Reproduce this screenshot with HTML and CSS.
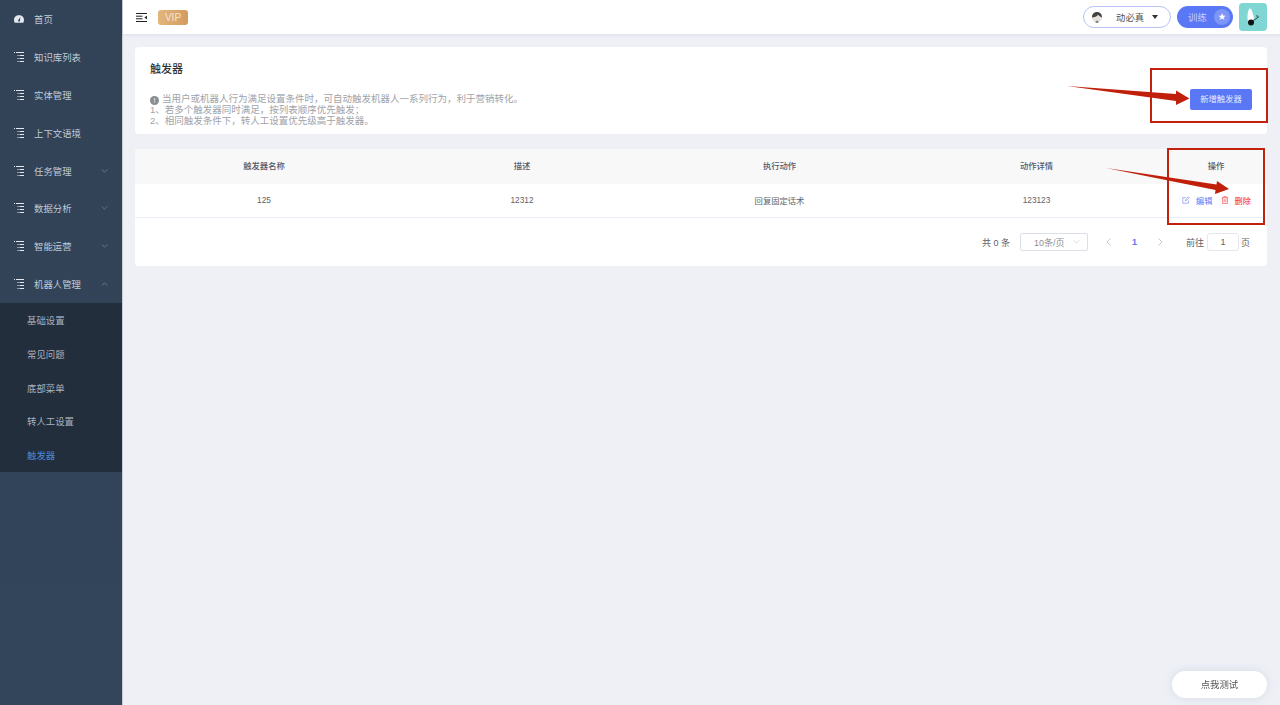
FILE: index.html
```html
<!DOCTYPE html>
<html lang="zh-CN">
<head>
  <meta charset="UTF-8" />
  <title>触发器</title>
  <link rel="stylesheet" href="styles.css">
</head>
<body>
  <svg width="0" height="0" class="defs">
    <symbol id="tree" viewBox="0 0 10 10">
      <path d="M0 .5h1M2 .5h8M3.500 3.500h1M5.500 3.500h4.500M3.500 6.500h1M5.500 6.500h4.500M3.500 9.500h1M5.500 9.500h4.500" fill="none" stroke="currentColor" stroke-width="1.100"/>
    </symbol>
    <symbol id="chev" viewBox="0 0 8 5">
      <path d="M.5 .5 4 4 7.500 .5" fill="none" stroke="currentColor" stroke-width=".8"/>
    </symbol>
  </svg>

  <div class="app">
    <aside class="sidebar">
      <a class="menu-item">
        <svg class="menu-icon" viewBox="0 0 11 8"><path d="M5.500 0C2.200 0 0 2.300 0 5c0 1.200.3 2.200.8 3h9.400c.5-.8.800-1.800.800-3 0-2.700-2.200-5-5.500-5zM4.800 5.200 7 1.800 6.500 5.700a1 1 0 1 1-1.700-.5z" fill="currentColor" fill-rule="evenodd"/></svg>
        <span>首页</span>
      </a>
      <a class="menu-item"><svg class="menu-icon"><use href="#tree"/></svg><span>知识库列表</span></a>
      <a class="menu-item"><svg class="menu-icon"><use href="#tree"/></svg><span>实体管理</span></a>
      <a class="menu-item"><svg class="menu-icon"><use href="#tree"/></svg><span>上下文语境</span></a>
      <a class="menu-item"><svg class="menu-icon"><use href="#tree"/></svg><span>任务管理</span><svg class="menu-chev"><use href="#chev"/></svg></a>
      <a class="menu-item"><svg class="menu-icon"><use href="#tree"/></svg><span>数据分析</span><svg class="menu-chev"><use href="#chev"/></svg></a>
      <a class="menu-item"><svg class="menu-icon"><use href="#tree"/></svg><span>智能运营</span><svg class="menu-chev"><use href="#chev"/></svg></a>
      <a class="menu-item"><svg class="menu-icon"><use href="#tree"/></svg><span>机器人管理</span><svg class="menu-chev open"><use href="#chev"/></svg></a>
      <div class="submenu">
        <a class="sub-item">基础设置</a>
        <a class="sub-item">常见问题</a>
        <a class="sub-item">底部菜单</a>
        <a class="sub-item">转人工设置</a>
        <a class="sub-item active">触发器</a>
      </div>
    </aside>

    <div class="main">
      <header class="topbar">
        <svg class="fold" viewBox="0 0 11 9"><path d="M0 .5h11M0 3.200h6.500M0 5.800h6.500M0 8.500h11" fill="none" stroke="#222" stroke-width="1"/><path d="M11 2.800v3.400L8.300 4.500z" fill="#222"/></svg>
        <span class="vip">VIP</span>
        <div class="topbar-right">
          <div class="user-pill">
            <svg class="avatar" viewBox="0 0 12 12"><circle cx="6" cy="6.500" r="5" fill="#e8e2dc"/><path d="M1 6.500C1 2.500 3.500 1 6 1s5 1.500 5 5.500C9.500 6 8 4.500 7 3.800 6 5.500 3 6.500 1 6.500z" fill="#444"/><circle cx="6" cy="11" r="1.500" fill="#888"/></svg>
            <span class="user-name">动必真</span>
            <span class="caret"></span>
          </div>
          <div class="train-pill">
            <span>训练</span>
            <span class="star-dot">★</span>
          </div>
          <div class="logo-box">
            <svg viewBox="0 0 28 28" width="28" height="28"><path d="M10 6c1-1 2.500 0 3 2l2 6-1 4-5 0c-1-3-.5-9 1-12z" fill="#fff"/><circle cx="12" cy="19.500" r="3" fill="#111"/><path d="M14 18l6-4.500" stroke="#222" stroke-width=".8"/><circle cx="18" cy="13" r=".7" fill="#222"/></svg>
          </div>
        </div>
      </header>

      <div class="content">
        <section class="card intro">
          <div class="intro-text">
            <h2>触发器</h2>
            <p><i class="info-dot">!</i>当用户或机器人行为满足设置条件时&#65292;可自动触发机器人一系列行为&#65292;利于营销转化。</p>
            <p>1、若多个触发器同时满足&#65292;按列表顺序优先触发&#65307;</p>
            <p>2、相同触发条件下&#65292;转人工设置优先级高于触发器。</p>
          </div>
          <button class="btn-primary">新增触发器</button>
        </section>

        <section class="card table-card">
          <div class="row head">
            <div>触发器名称</div>
            <div>描述</div>
            <div>执行动作</div>
            <div>动作详情</div>
            <div>操作</div>
          </div>
          <div class="row body">
            <div>125</div>
            <div>12312</div>
            <div>回复固定话术</div>
            <div>123123</div>
            <div class="ops">
              <a class="op-edit">
                <svg viewBox="0 0 10 10"><path d="M8 5.500V9H1V2h3.500M4 6l.3-1.500L8 1l1 1-3.600 3.700z" fill="none" stroke="currentColor" stroke-width=".7"/></svg>
                编辑
              </a>
              <a class="op-del">
                <svg viewBox="0 0 10 10"><path d="M1 2.200h8M3.500 2V.8h3V2M2 2.200V9.300h6V2.200M4 4v3.500M6 4v3.500" fill="none" stroke="currentColor" stroke-width=".7"/></svg>
                删除
              </a>
            </div>
          </div>
          <div class="pager">
            <span class="pager-total">共 0 条</span>
            <div class="pager-size">10条/页<svg class="pager-chev"><use href="#chev"/></svg></div>
            <svg class="pager-arrow" viewBox="0 0 5 8"><path d="M4.500 .5 1 4l3.500 3.500" fill="none" stroke="currentColor" stroke-width=".8"/></svg>
            <span class="pager-num">1</span>
            <svg class="pager-arrow" viewBox="0 0 5 8"><path d="M.5 .5 4 4 .5 7.500" fill="none" stroke="currentColor" stroke-width=".8"/></svg>
            <span class="pager-goto">前往</span>
            <div class="pager-input">1</div>
            <span>页</span>
          </div>
        </section>
      </div>
    </div>
  </div>

  <button class="test-btn">点我测试</button>

  <!-- red marks drawn on top of the screenshot -->
  <svg class="marks" viewBox="0 0 1280 705">
    <rect x="1151" y="69" width="116" height="53" fill="none" stroke="#c4200e" stroke-width="2"/>
    <rect x="1168" y="149" width="96" height="75" fill="none" stroke="#c4200e" stroke-width="2"/>
    <path d="M1067 86 1176 94 1176 90.500 1189.500 98.500 1176 105 1176 101z" fill="#c0200a"/>
    <path d="M1106 168 1216.500 184.500 1217 181 1229 189 1215 194 1215.500 190z" fill="#c0200a"/>
  </svg>
</body>
</html>
```
FILE: styles.css
```css
* {
  box-sizing: border-box;
}

html,
body {
  height: 100%;
}

body {
  margin: 0;
  background-color: #eef0f6;
  font-family: "Liberation Sans", "Noto Sans CJK SC", sans-serif;
  font-size: 9px;
  color: #606266;
  overflow: hidden;
}

.defs {
  display: block;
  height: 0;
}

.app {
  display: flex;
  height: 705px;
}

/* sidebar */
.sidebar {
  width: 123px;
  flex-shrink: 0;
  background: linear-gradient(#324257, #33455a);
  border-right: 1px solid #c9ccd3;
  color: #bfcbd9;
}

.menu-item {
  display: flex;
  align-items: center;
  height: 37.900px;
  padding-left: 14px;
  padding-right: 14px;
  font-size: 9.400px;
}

.menu-icon {
  width: 10px;
  height: 10px;
  margin-right: 10px;
  color: #e4e8ee;
}

.menu-chev {
  width: 7px;
  height: 4px;
  margin-left: auto;
  color: #8593a6;
}

.menu-chev.open {
  transform: rotate(180deg);
}

.submenu {
  background-color: #222e3c;
  height: 169px;
}

.sub-item {
  display: flex;
  align-items: center;
  height: 33.800px;
  padding-left: 27px;
  font-size: 9.400px;
  color: #a9b3c0;
}

.sub-item.active {
  color: #4a8ad8;
}

/* top bar */
.main {
  flex: 1;
  min-width: 0;
  display: flex;
  flex-direction: column;
}

.topbar {
  display: flex;
  align-items: center;
  height: 34px;
  padding: 0 13px;
  background-color: #fff;
  box-shadow: 0 1px 3px rgba(0, 21, 41, 0.08);
}

.fold {
  width: 11px;
  height: 9px;
  margin-right: 11px;
}

.vip {
  width: 30px;
  height: 15px;
  line-height: 15px;
  text-align: center;
  border-radius: 3px;
  background: linear-gradient(90deg, #e3b67d, #d49a5f);
  color: #f6e6d2;
  font-size: 10px;
}

.topbar-right {
  display: flex;
  align-items: center;
  margin-left: auto;
}

.user-pill {
  display: flex;
  align-items: center;
  width: 88px;
  height: 22px;
  padding: 0 12px 0 7px;
  margin-right: 6px;
  border: 1px solid #b7c3f8;
  border-radius: 11px;
  color: #555;
  font-size: 9.400px;
}

.avatar {
  width: 12px;
  height: 12px;
}

.user-name {
  margin-left: 13px;
}

.caret {
  margin-left: auto;
  border: 3.500px solid transparent;
  border-top: 4px solid #333;
  border-bottom: 0;
}

.train-pill {
  display: flex;
  align-items: center;
  justify-content: space-between;
  width: 56px;
  height: 22px;
  padding: 0 3px 0 11px;
  margin-right: 6px;
  border-radius: 11px;
  background-color: #5a78f5;
  color: #c6d1fb;
  font-size: 9.400px;
}

.star-dot {
  width: 16px;
  height: 16px;
  line-height: 16px;
  text-align: center;
  border-radius: 50%;
  background-color: #7d95f7;
  color: #fff;
  font-size: 8px;
}

.logo-box {
  width: 28px;
  height: 28px;
  border-radius: 4px;
  background-color: #7fd6d2;
}

/* content */
.content {
  padding: 13px 13px 0 12px;
  display: flex;
  flex-direction: column;
  gap: 15px;
}

.card {
  background-color: #fff;
  border-radius: 4px;
}

.intro {
  display: flex;
  align-items: flex-start;
  justify-content: space-between;
  height: 87px;
  padding: 0 15px;
}

.intro h2 {
  margin: 14px 0 16px;
  height: 16px;
  line-height: 16px;
  font-size: 11px;
  font-weight: 500;
  color: #303133;
}

.intro p {
  margin: 0;
  height: 11px;
  line-height: 11px;
  font-size: 9.500px;
  color: #a0a3a9;
}

.info-dot {
  display: inline-block;
  width: 9px;
  height: 9px;
  line-height: 9px;
  margin-right: 3px;
  border-radius: 50%;
  background-color: #8a8d93;
  color: #fff;
  font-size: 7px;
  font-style: normal;
  text-align: center;
  vertical-align: -1px;
}

.btn-primary {
  width: 62px;
  height: 21px;
  margin-top: 42px;
  padding: 0 0 4px;
  border: none;
  border-radius: 2px;
  background-color: #5a78f5;
  color: #e6ebff;
  font-family: inherit;
  font-size: 8.300px;
}

.table-card {
  height: 117px;
}

.row {
  display: grid;
  grid-template-columns: 258px 258px 257px 257px 102px;
  align-items: center;
  text-align: center;
}

.row.head {
  height: 35px;
  padding-bottom: 3px;
  background-color: #f8f8f9;
  border-radius: 4px 4px 0 0;
  font-size: 8.300px;
  font-weight: 500;
  color: #515a6e;
}

.row.body {
  height: 34px;
  padding-bottom: 1px;
  border-bottom: 1px solid #ebeef5;
  font-size: 8.300px;
}

.ops {
  display: flex;
  justify-content: center;
  gap: 8px;
  padding-left: 1px;
  font-size: 8.200px;
}

.ops a {
  display: flex;
  align-items: center;
}

.ops svg {
  width: 8px;
  height: 8px;
  margin-right: 6px;
}

.op-edit {
  color: #5a78f5;
}

.op-del {
  color: #f5222d;
}

.pager {
  display: flex;
  align-items: center;
  justify-content: flex-end;
  height: 48px;
  padding-right: 17px;
  font-size: 9px;
  color: #606266;
}

.pager-total {
  margin-right: 10px;
}

.pager-size {
  display: flex;
  align-items: center;
  justify-content: space-between;
  width: 68px;
  height: 18px;
  padding: 0 7px 0 13px;
  margin-right: 18px;
  border: 1px solid #dcdfe6;
  border-radius: 2px;
  color: #8a8d93;
}

.pager-chev {
  width: 7px;
  height: 4px;
  color: #c0c4cc;
}

.pager-arrow {
  width: 5px;
  height: 8px;
  color: #b8bcc4;
}

.pager-num {
  width: 47px;
  text-align: center;
  font-weight: 700;
  color: #5a78f5;
}

.pager-goto {
  margin-left: 23px;
  margin-right: 3px;
}

.pager-input {
  width: 32px;
  height: 18px;
  line-height: 16px;
  margin-right: 2px;
  text-align: center;
  border: 1px solid #e4e7ed;
  border-radius: 3px;
}

/* floating */
.test-btn {
  position: fixed;
  right: 13px;
  bottom: 7px;
  width: 95px;
  height: 27px;
  padding: 0 0 1px;
  border: none;
  border-radius: 14px;
  background-color: #fff;
  box-shadow: 0 0 10px rgba(120, 130, 160, 0.18);
  color: #555;
  font-family: inherit;
  font-size: 9.400px;
}

.marks {
  position: fixed;
  left: 0;
  top: 0;
  width: 1280px;
  height: 705px;
  pointer-events: none;
}
```
